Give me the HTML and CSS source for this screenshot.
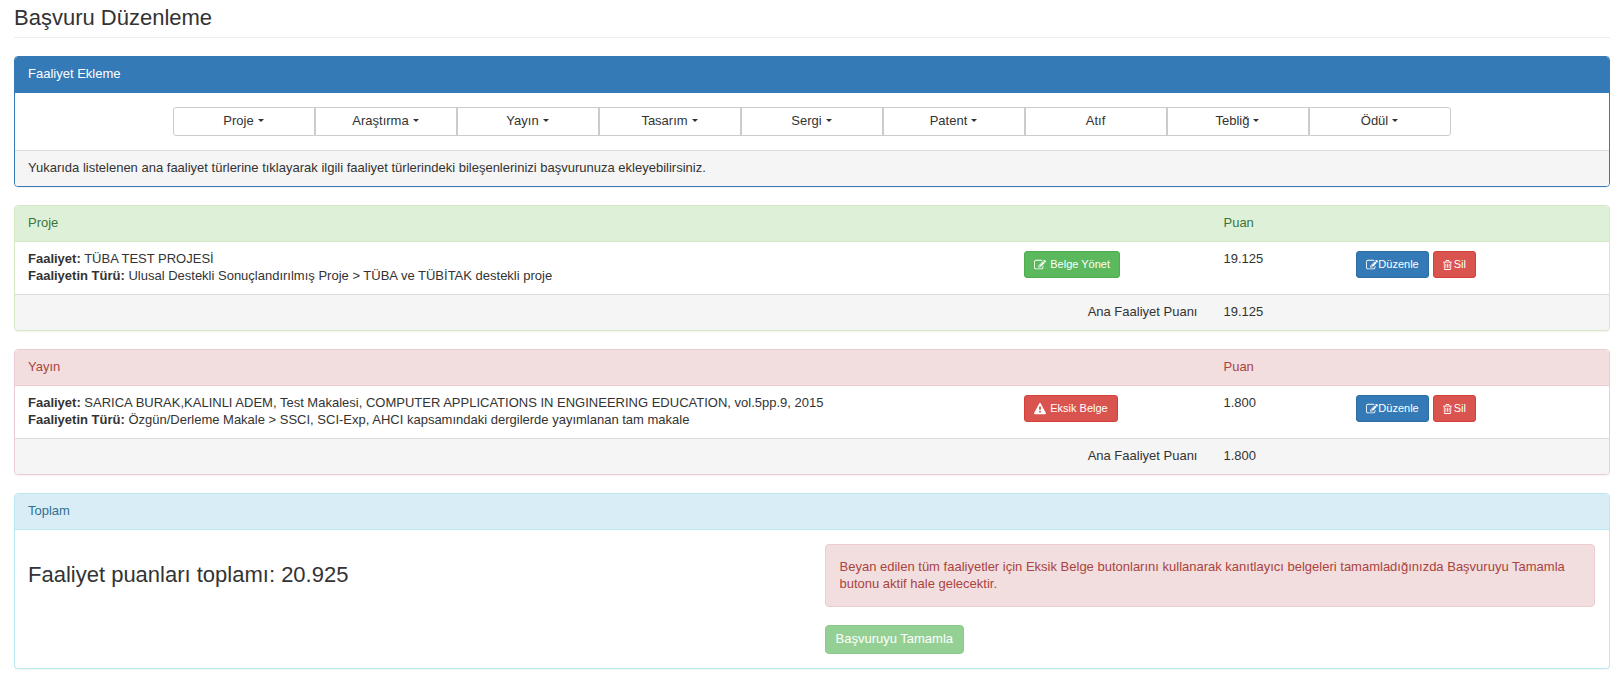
FILE: index.html
```html
<!DOCTYPE html>
<html lang="tr">
<head>
<meta charset="utf-8">
<title>Başvuru Düzenleme</title>
<meta name="viewport" content="width=device-width, initial-scale=1">
<link rel="stylesheet" href="styles.css">
</head>
<body>
<svg class="sprite" aria-hidden="true">
  <symbol id="icon-edit" viewBox="0 0 1792 1792"><path d="M888 1184l116-116-152-152-116 116v56h96v96h56zm440-720q-16-16-33 1l-350 350q-17 17-1 33t33-1l350-350q17-17 1-33zm80 594v190q0 119-84.500 203.500t-203.500 84.500h-832q-119 0-203.500-84.500t-84.500-203.500v-832q0-119 84.500-203.500t203.500-84.500h832q63 0 117 25 15 7 18 23 3 17-9 29l-49 49q-14 14-32 8-23-6-45-6h-832q-66 0-113 47t-47 113v832q0 66 47 113t113 47h832q66 0 113-47t47-113v-126q0-13 9-22l64-64q15-15 35-7t20 29zm-96-738l288 288-672 672h-288v-288zm444 132l-92 92-288-288 92-92q28-28 68-28t68 28l152 152q28 28 28 68t-28 68z"/></symbol>
  <symbol id="icon-trash" viewBox="192 0 1408 1792"><path d="M704 736v576q0 14-9 23t-23 9h-64q-14 0-23-9t-9-23v-576q0-14 9-23t23-9h64q14 0 23 9t9 23zm256 0v576q0 14-9 23t-23 9h-64q-14 0-23-9t-9-23v-576q0-14 9-23t23-9h64q14 0 23 9t9 23zm256 0v576q0 14-9 23t-23 9h-64q-14 0-23-9t-9-23v-576q0-14 9-23t23-9h64q14 0 23 9t9 23zm128 724v-948h-896v948q0 22 7 40.500t14.500 27 10.500 8.500h832q3 0 10.500-8.500t14.500-27 7-40.500zm-672-1076h448l-48-117q-7-9-17-11h-317q-10 2-17 11zm928 32v64q0 14-9 23t-23 9h-96v948q0 83-47 143.500t-113 60.500h-832q-66 0-113-58.500t-47-141.500v-952h-96q-14 0-23-9t-9-23v-64q0-14 9-23t23-9h309l70-167q15-37 54-63t79-26h320q40 0 79 26t54 63l70 167h309q14 0 23 9t9 23z"/></symbol>
  <symbol id="icon-warning" viewBox="0 0 1792 1792"><path d="M1024 1375v-190q0-14-9.500-23.500t-22.500-9.500h-192q-13 0-22.500 9.500t-9.500 23.500v190q0 14 9.500 23.500t22.500 9.500h192q13 0 22.500-9.500t9.500-23.500zm-2-374l18-459q0-12-10-19-13-11-24-11h-220q-11 0-24 11-10 7-10 21l17 457q0 10 10 16.500t24 6.500h185q14 0 23.500-6.500t10.500-16.500zm-14-934l768 1408q35 63-2 126-17 29-46.500 46t-63.500 17h-1536q-34 0-63.500-17t-46.500-46q-37-63-2-126l768-1408q17-31 47-49t65-18 65 18 47 49z"/></symbol>
</svg>

<main class="page">
  <h1 class="page-title">Başvuru Düzenleme</h1>

  <section class="panel panel-primary">
    <h2 class="panel-heading">Faaliyet Ekleme</h2>
    <div class="panel-body">
      <div class="btn-group">
        <button type="button" class="btn btn-default">Proje<span class="caret"></span></button>
        <button type="button" class="btn btn-default">Araştırma<span class="caret"></span></button>
        <button type="button" class="btn btn-default">Yayın<span class="caret"></span></button>
        <button type="button" class="btn btn-default">Tasarım<span class="caret"></span></button>
        <button type="button" class="btn btn-default">Sergi<span class="caret"></span></button>
        <button type="button" class="btn btn-default">Patent<span class="caret"></span></button>
        <button type="button" class="btn btn-default">Atıf</button>
        <button type="button" class="btn btn-default">Tebliğ<span class="caret"></span></button>
        <button type="button" class="btn btn-default">Ödül<span class="caret"></span></button>
      </div>
    </div>
    <p class="panel-footer">Yukarıda listelenen ana faaliyet türlerine tıklayarak ilgili faaliyet türlerindeki bileşenlerinizi başvurunuza ekleyebilirsiniz.</p>
  </section>

  <section class="panel panel-success">
    <div class="panel-heading activity-row">
      <h2 class="heading-text span-main">Proje</h2>
      <div>Puan</div>
    </div>
    <div class="activity-row activity-body">
      <div>
        <p><strong>Faaliyet:</strong> TÜBA TEST PROJESİ</p>
        <p><strong>Faaliyetin Türü:</strong> Ulusal Destekli Sonuçlandırılmış Proje &gt; TÜBA ve TÜBİTAK destekli proje</p>
      </div>
      <div class="actions"><button type="button" class="btn btn-sm btn-success"><svg class="icon icon-spaced"><use href="#icon-edit"/></svg>Belge Yönet</button></div>
      <div>19.125</div>
      <div class="actions">
        <button type="button" class="btn btn-sm btn-primary"><svg class="icon"><use href="#icon-edit"/></svg>Düzenle</button>
        <button type="button" class="btn btn-sm btn-danger"><svg class="icon icon-narrow"><use href="#icon-trash"/></svg>Sil</button>
      </div>
    </div>
    <div class="panel-footer activity-row">
      <div class="span-main total-label">Ana Faaliyet Puanı</div>
      <div>19.125</div>
    </div>
  </section>

  <section class="panel panel-danger">
    <div class="panel-heading activity-row">
      <h2 class="heading-text span-main">Yayın</h2>
      <div>Puan</div>
    </div>
    <div class="activity-row activity-body">
      <div>
        <p><strong>Faaliyet:</strong> SARICA BURAK,KALINLI ADEM, Test Makalesi, COMPUTER APPLICATIONS IN ENGINEERING EDUCATION, vol.5pp.9, 2015</p>
        <p><strong>Faaliyetin Türü:</strong> Özgün/Derleme Makale &gt; SSCI, SCI-Exp, AHCI kapsamındaki dergilerde yayımlanan tam makale</p>
      </div>
      <div class="actions"><button type="button" class="btn btn-sm btn-danger"><svg class="icon icon-spaced"><use href="#icon-warning"/></svg>Eksik Belge</button></div>
      <div>1.800</div>
      <div class="actions">
        <button type="button" class="btn btn-sm btn-primary"><svg class="icon"><use href="#icon-edit"/></svg>Düzenle</button>
        <button type="button" class="btn btn-sm btn-danger"><svg class="icon icon-narrow"><use href="#icon-trash"/></svg>Sil</button>
      </div>
    </div>
    <div class="panel-footer activity-row">
      <div class="span-main total-label">Ana Faaliyet Puanı</div>
      <div>1.800</div>
    </div>
  </section>

  <section class="panel panel-info">
    <h2 class="panel-heading">Toplam</h2>
    <div class="panel-body summary">
      <h3 class="summary-total">Faaliyet puanları toplamı: 20.925</h3>
      <div>
        <p class="alert">Beyan edilen tüm faaliyetler için Eksik Belge butonlarını kullanarak kanıtlayıcı belgeleri tamamladığınızda Başvuruyu Tamamla butonu aktif hale gelecektir.</p>
        <button type="button" class="btn btn-success" disabled>Başvuruyu Tamamla</button>
      </div>
    </div>
  </section>
</main>
</body>
</html>
```

FILE: styles.css
```css
*,
*::before,
*::after {
  box-sizing: border-box;
}

body {
  margin: 0;
  background: #fff;
  color: #333;
  font-family: "Liberation Sans", Arial, Helvetica, sans-serif;
  font-size: 13px;
  line-height: 17px;
}

h1,
h2,
h3,
p {
  margin: 0;
  font-weight: 400;
}

.sprite {
  display: none;
}

.page {
  padding: 5px 9px 0 14px;
}

.page-title {
  margin-bottom: 18px;
  padding-bottom: 7px;
  border-bottom: 1px solid #eee;
  font-size: 22px;
  line-height: 25px;
}

/* Panels */

.panel {
  margin-bottom: 18px;
  border: 1px solid #ddd;
  border-radius: 4px;
  background: #fff;
  box-shadow: 0 1px 1px rgba(0, 0, 0, 0.05);
}

.panel-heading {
  padding: 8px 13px 10px;
  border-bottom: 1px solid;
  border-radius: 3px 3px 0 0;
  font-size: 13px;
}

.heading-text {
  font-size: 13px;
}

.panel-body {
  padding: 14px 14px 14px 13px;
}

.panel-footer {
  padding: 8px 13px 10px;
  border-top: 1px solid #ddd;
  border-radius: 0 0 3px 3px;
  background: #f5f5f5;
}

.panel-primary,
.panel-primary .panel-heading {
  border-color: #337ab7;
}

.panel-primary .panel-heading {
  background: #337ab7;
  color: #fff;
}

.panel-success,
.panel-success .panel-heading {
  border-color: #d6e9c6;
}

.panel-success .panel-heading {
  background: #dff0d8;
  color: #3c763d;
}

.panel-danger,
.panel-danger .panel-heading {
  border-color: #ebccd1;
}

.panel-danger .panel-heading {
  background: #f2dede;
  color: #a94442;
}

.panel-info,
.panel-info .panel-heading {
  border-color: #bce8f1;
}

.panel-info .panel-heading {
  background: #d9edf7;
  color: #31708f;
}

/* Activity rows: description, document, score, actions */

.activity-row {
  display: grid;
  grid-template-columns: minmax(0, 15fr) minmax(0, 3fr) minmax(0, 2fr) minmax(0, 4fr);
  padding-right: 0;
  padding-left: 0;
}

.activity-row > * {
  padding: 0 13px;
}

.activity-body {
  padding-top: 8px;
  padding-bottom: 10px;
}

.span-main {
  grid-column: span 2;
}

.total-label {
  text-align: right;
}

.actions {
  display: flex;
  flex-wrap: wrap;
  align-items: flex-start;
  gap: 4px;
  margin-top: 1px;
}

/* Buttons */

.btn {
  display: inline-flex;
  align-items: center;
  justify-content: center;
  padding: 4px 10px 6px;
  border: 1px solid transparent;
  border-radius: 4px;
  font-family: inherit;
  font-size: 13px;
  line-height: 17px;
  white-space: nowrap;
  cursor: pointer;
}

.btn-sm {
  padding: 5px 9px;
  border-radius: 3px;
  font-size: 11px;
  line-height: 15px;
}

.btn-default {
  border-color: #ccc;
  background: #fff;
  color: #333;
}

.btn-primary {
  border-color: #2e6da4;
  background: #337ab7;
  color: #fff;
}

.btn-success {
  border-color: #4cae4c;
  background: #5cb85c;
  color: #fff;
}

.btn-danger {
  border-color: #d43f3a;
  background: #d9534f;
  color: #fff;
}

.btn:disabled {
  opacity: 0.65;
  cursor: not-allowed;
}

.btn-group {
  display: flex;
  max-width: 1278px;
  margin: 0 auto;
}

.btn-group .btn {
  flex: 1 1 0;
  border-radius: 0;
}

.btn-group .btn:first-child {
  border-radius: 3px 0 0 3px;
}

.btn-group .btn:last-child {
  border-radius: 0 3px 3px 0;
}

.caret {
  margin-left: 4px;
  border-top: 3px solid;
  border-right: 3px solid transparent;
  border-left: 3px solid transparent;
}

.icon {
  flex: none;
  width: 12px;
  height: 12px;
  fill: currentColor;
}

.icon-narrow {
  width: 9px;
  margin-right: 2px;
}

.icon-spaced {
  margin-right: 4px;
}

/* Summary */

.summary {
  display: grid;
  grid-template-columns: minmax(0, 1fr) minmax(0, 1fr);
  column-gap: 26px;
}

.summary-total {
  margin-top: 18px;
  font-size: 22px;
  line-height: 25px;
}

.alert {
  margin-bottom: 18px;
  padding: 13px 14px 14px;
  border: 1px solid #ebccd1;
  border-radius: 4px;
  background: #f2dede;
  color: #a94442;
}
```
